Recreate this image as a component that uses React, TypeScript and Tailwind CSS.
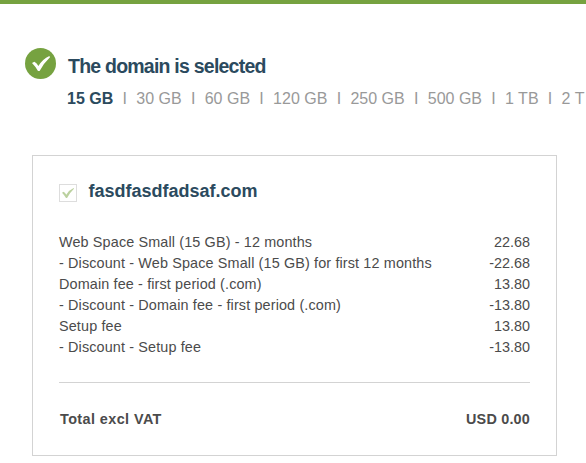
import clsx from 'clsx';

const SIZE_ARR = ['15 GB', '30 GB', '60 GB', '120 GB', '250 GB', '500 GB', '1 TB', '2 T'];

const FEE_ARR = [
  { label: 'Web Space Small (15 GB) - 12 months', price: '22.68' },
  { label: '- Discount - Web Space Small (15 GB) for first 12 months', price: '-22.68' },
  { label: 'Domain fee - first period (.com)', price: '13.80' },
  { label: '- Discount - Domain fee - first period (.com)', price: '-13.80' },
  { label: 'Setup fee', price: '13.80' },
  { label: '- Discount - Setup fee', price: '-13.80' },
];

const CheckMark = ({ className }: { className?: string }) => (
  <svg viewBox="0 0 18 15" className={className} fill="currentColor" preserveAspectRatio="none">
    <path d="M0 7 L2.4 5.8 Q4.9 7.4 6.4 10 Q10.6 3 17.4 0 L18 1.2 Q11.8 7 7.6 15 L6 15 Q3.4 10.4 0 7 Z" />
  </svg>
);

const App = () => {
  return (
    <div className="h-[463px] w-[586px] overflow-hidden border-t-4 border-[#76a240] bg-white font-['Liberation_Sans',Arial,sans-serif]">
      <header className="flex pt-11 pl-[25px]">
        <div className="flex size-[31px] shrink-0 items-center justify-center rounded-full bg-[#76a240] text-white">
          <CheckMark className="h-[15px] w-[18px]" />
        </div>
        <div className="pt-1.5 pl-[11px]">
          <h1 className="pl-px text-[19.5px] leading-6 font-bold tracking-[-0.77px] text-[#2b4a5e]">The domain is selected</h1>
          <ul className="mt-[11px] flex text-[16px] leading-5 whitespace-nowrap text-[#999]">
            {SIZE_ARR.map((size, key) => (
              <li key={size} className="flex">
                {key > 0 && <span className="mx-[9.3px]">I</span>}
                <span className={clsx(key === 0 && 'font-bold text-[#2b4a5e]')}>{size}</span>
              </li>
            ))}
          </ul>
        </div>
      </header>

      <section className="mt-[46px] ml-8 h-[301px] w-[525px] border border-[#d3d3d3] px-[26px]">
        <div className="flex pt-6">
          <div className="mt-1 flex size-[18px] items-center justify-center border border-[#ddd] text-[#bbd19f]">
            <CheckMark className="h-2.5 w-3" />
          </div>
          <h2 className="ml-[11.5px] text-[18px] leading-[22px] font-bold text-[#2b4a5e]">fasdfasdfadsaf.com</h2>
        </div>

        <dl className="mt-[30px] text-[14.4px] leading-[21px] text-[#4b4b4b]">
          {FEE_ARR.map(({ label, price }) => (
            <div key={label} className="flex justify-between">
              <dt className="tracking-[0.135px]">{label}</dt>
              <dd>{price}</dd>
            </div>
          ))}
        </dl>

        <div className="mt-6 flex justify-between border-t border-[#d3d3d3] pt-[26px] text-[14.4px] leading-[21px] font-bold text-[#4b4b4b]">
          <span className="pl-px tracking-[0.42px]">Total excl VAT</span>
          <span className="tracking-[0.2px]">USD 0.00</span>
        </div>
      </section>
    </div>
  );
};

export default App;
